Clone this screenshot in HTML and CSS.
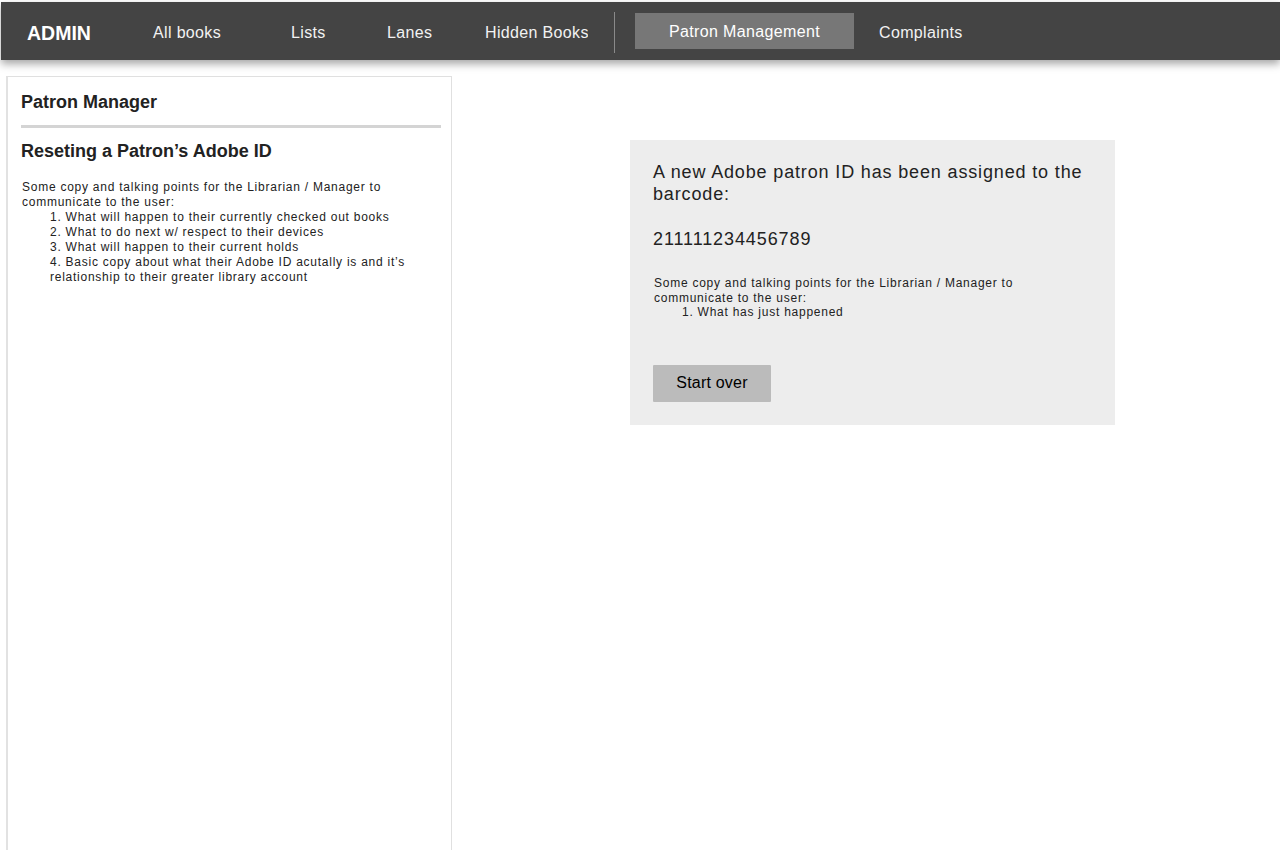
FILE: index.html
```html
<!DOCTYPE html>
<html>
<head>
<meta charset="utf-8">
<link rel="stylesheet" href="styles.css">
</head>
<body>
<div class="page">
  <nav class="navbar">
    <div class="brand">ADMIN</div>
    <a class="nav-item item-books">All books</a>
    <a class="nav-item item-lists">Lists</a>
    <a class="nav-item item-lanes">Lanes</a>
    <a class="nav-item item-hidden">Hidden Books</a>
    <span class="divider"></span>
    <a class="nav-item item-patron active">Patron Management</a>
    <a class="nav-item item-complaints">Complaints</a>
  </nav>
  <div class="main">
    <aside class="sidebar">
      <h2 class="side-title">Patron Manager</h2>
      <hr class="side-rule">
      <h3 class="side-sub">Reseting a Patron’s Adobe ID</h3>
      <div class="copy">
        <p>Some copy and talking points for the Librarian / Manager to communicate to the user:</p>
        <ol>
          <li>What will happen to their currently checked out books</li>
          <li>What to do next w/ respect to their devices</li>
          <li>What will happen to their current holds</li>
          <li>Basic copy about what their Adobe ID acutally is and it’s relationship to their greater library account</li>
        </ol>
      </div>
    </aside>
    <section class="content">
      <div class="card">
        <h2 class="card-title">A new Adobe patron ID has been assigned to the barcode:</h2>
        <p class="barcode">211111234456789</p>
        <div class="copy card-copy">
          <p>Some copy and talking points for the Librarian / Manager to communicate to the user:</p>
          <ol>
            <li>What has just happened</li>
          </ol>
        </div>
        <button class="btn">Start over</button>
      </div>
    </section>
  </div>
</div>
</body>
</html>
```

FILE: styles.css
```css
* { box-sizing: border-box; }
html, body { margin: 0; padding: 0; background: #fff; }
body {
  font-family: "Liberation Sans", Arial, Helvetica, sans-serif;
  color: #222;
  width: 1280px;
  height: 850px;
  overflow: hidden;
}
.page {
  padding-top: 2px;
  background: #fff;
  height: 850px;
  display: flex;
  flex-direction: column;
}
.navbar {
  margin-left: 1px;
  height: 58px;
  background: #444444;
  display: flex;
  align-items: center;
  box-shadow: 0 4px 8px rgba(0,0,0,0.35);
  position: relative;
  z-index: 2;
  flex-shrink: 0;
}
.brand {
  color: #fff;
  font-weight: bold;
  font-size: 19.5px;
  margin-left: 26px;
  width: 126px;
  padding-top: 4px;
}
.nav-item {
  color: #f2f2f2;
  font-size: 16px;
  letter-spacing: 0.35px;
  white-space: nowrap;
  display: block;
  padding-top: 4px;
}
.item-books { width: 138px; }
.item-lists { width: 96px; }
.item-lanes { width: 98px; }
.item-hidden { width: 103px; overflow: hidden; }
.divider {
  width: 1px;
  height: 41px;
  margin-top: 2px;
  background: #8a8a8a;
  margin-left: 26px;
  margin-right: 20px;
}
.item-patron {
  width: 219px;
  height: 36px;
  line-height: 34px;
  padding-top: 2px;
  text-align: center;
  background: #777777;
}
.item-patron.active { color: #fff; }
.item-complaints { margin-left: 25px; }

.main {
  display: flex;
  flex: 1;
  padding-top: 16px;
}
.sidebar {
  margin-left: 6px;
  width: 446px;
  border: 1px solid #e0e0e0;
  border-left: 2px solid #e2e2e2;
  border-bottom: 0;
  padding: 14px 10px 0 13px;
  height: 774px;
}
.side-title {
  font-size: 18px;
  font-weight: bold;
  margin: 0;
  line-height: 22px;
  color: #222;
}
.side-rule {
  border: 0;
  height: 3px;
  background: #d4d4d4;
  margin: 12px 0 0 0;
}
.side-sub {
  font-size: 18px;
  font-weight: bold;
  margin: 12px 0 0 0;
  line-height: 22px;
  color: #222;
}
.copy {
  font-size: 12px;
  letter-spacing: 0.75px;
  line-height: 15px;
  color: #222;
  margin-top: 18px;
}
.copy p { margin: 0 0 0 1px; }
.copy ol {
  margin: 0;
  padding-left: 29px;
  list-style-position: inside;
}

.content {
  flex: 1;
}
.card {
  margin-left: 178px;
  margin-top: 64px;
  width: 485px;
  height: 285px;
  background: #ededed;
  padding: 21px 23px 0 23px;
}
.card-title {
  margin: 0;
  font-size: 18px;
  font-weight: normal;
  letter-spacing: 0.85px;
  line-height: 22px;
  color: #222;
}
.barcode {
  margin: 23px 0 0 0;
  font-size: 18px;
  letter-spacing: 0.9px;
  line-height: 22px;
  color: #222;
}
.card-copy {
  margin-top: 26px;
  line-height: 14.5px;
  max-width: 380px;
}
.card-copy ol { padding-left: 29px; }
.btn {
  display: block;
  margin-top: 45px;
  width: 118px;
  height: 37px;
  border: 0;
  border-radius: 1px;
  background: #bbbbbb;
  font-family: "Liberation Sans", Arial, sans-serif;
  font-size: 16px;
  letter-spacing: 0.2px;
  color: #000;
  padding: 0;
}
```
